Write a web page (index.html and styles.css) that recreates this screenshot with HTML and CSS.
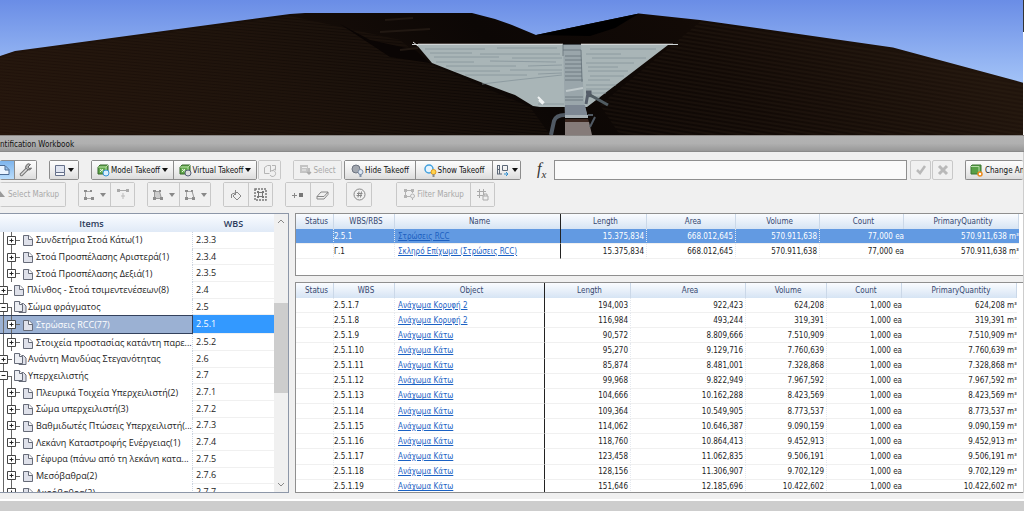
FILE: index.html
```html
<!DOCTYPE html>
<html lang="el">
<head>
  <meta charset="utf-8">
  <title>Quantification Workbook</title>
  <link rel="stylesheet" href="styles.css">
</head>
<body>
  <!-- shared icons -->
  <svg class="defs" width="0" height="0">
    <symbol id="page" viewBox="0 0 10 12">
      <path d="M.5 1.5h5.500l3.500 3.500v6.500h-9z" fill="#dfe1ea" stroke="#666b78"/>
      <path d="M5.500 1.500v4h4" fill="#fff" stroke="#666b78"/>
    </symbol>
    <symbol id="pages" viewBox="0 0 13 12">
      <path d="M5.500 2.500h4l2.500 2.500v6.500h-7z" fill="#dfe1ea" stroke="#666b78"/>
      <path d="M.5 .5h5l3 3v7h-8z" fill="#eceef3" stroke="#666b78"/>
      <path d="M5.500 .5v3h3" fill="#fff" stroke="#666b78"/>
    </symbol>
    <symbol id="plus" viewBox="0 0 9 9">
      <path d="M.5 .5h8v8h-8z" fill="#fff" stroke="#444"/>
      <path d="M2.500 4.500h4M4.500 2.500v4" stroke="#222"/>
    </symbol>
    <symbol id="minus" viewBox="0 0 9 9">
      <path d="M.5 .5h8v8h-8z" fill="#fff" stroke="#444"/>
      <path d="M2.500 4.500h4" stroke="#222"/>
    </symbol>
    <symbol id="cube" viewBox="0 0 13 13">
      <path d="M1 3l2-2h8v7l-2 2H1z" fill="#62a84c" stroke="#35672a"/>
      <path d="M1 3h8v7M9 3l2-2" fill="none" stroke="#b9e0a6"/>
      <path d="M3 5l4 3M3 8l3-3" stroke="#e4f5dc"/>
    </symbol>
    <symbol id="shape" viewBox="0 0 12 12">
      <path d="M2.500 2.500v7M2.500 9.500h7M2.500 2.500h5" fill="none" stroke="#aaa"/>
      <path d="M1 1h3v2H1zM1 8h3v3H1zM8 8h3v3H8zM7 1h2v2H7z" fill="#8c8c8c"/>
    </symbol>
    <symbol id="filter" viewBox="0 0 13 13">
      <path d="M2 2.500h9M2.500 2v7M2 8.500h5M9.500 2v3" fill="none" stroke="#b4b4b4"/>
      <path d="M1 1h3v3H1zM8 1h3v3H8zM1 7h3v3H1z" fill="#b4b4b4"/>
      <circle cx="9.500" cy="8" r="2" fill="#eee" stroke="#b4b4b4"/>
      <path d="M9.500 10v2" stroke="#b4b4b4"/>
    </symbol>
  </svg>

  <div class="page">
    <svg class="scene" viewBox="0 0 1024 135" preserveAspectRatio="none">
      <defs>
        <linearGradient id="sky" x1="0" y1="0" x2="0" y2="1">
          <stop offset="0" stop-color="#6a8de6"/>
          <stop offset=".65" stop-color="#a6c6f8"/>
        </linearGradient>
        <linearGradient id="ground" x1="0" y1="1" x2="1" y2=".9">
          <stop offset="0" stop-color="#22130b"/>
          <stop offset=".3" stop-color="#190f09"/>
          <stop offset=".55" stop-color="#0c0705"/>
          <stop offset=".75" stop-color="#120a06"/>
          <stop offset="1" stop-color="#20140c"/>
        </linearGradient>
        <pattern id="contourLeft" width="12" height="3" patternUnits="userSpaceOnUse" patternTransform="rotate(5)">
          <path d="M0 1h12" stroke="#3b2617" stroke-width=".6" opacity=".6"/>
        </pattern>
        <pattern id="contourRight" width="12" height="4" patternUnits="userSpaceOnUse" patternTransform="rotate(9)">
          <path d="M0 1h12" stroke="#3a2718" stroke-width=".7" opacity=".6"/>
        </pattern>
      </defs>
      <rect width="1024" height="135" fill="url(#sky)"/>
      <path d="M0 56L15 51 45 47 290 14 305 13H472L495 19 512 25 536 35 639 13.500 700 20 893 47.500 1024 83V135H0z" fill="url(#ground)"/>
      <path d="M0 58L15 53 290 16 400 40 430 64 530 107 550 135H0z" fill="url(#contourLeft)"/>
      <path d="M670 47L700 22 893 50 1024 85V135H620L600 105z" fill="url(#contourRight)"/>
      <path d="M536 35L639 13.500 615 28 590 36z" fill="#000"/>
      <path d="M340 24l30 16 45 10 15 13-40-6z" fill="#0a0504"/>
      <path d="M385 20l28-2M380 32l50-3M400 50l18-2" stroke="#211812" stroke-width="2"/>

      <path d="M416 44L432 63 488 85 515 95 533 106 540 107H587L668 45z" fill="#a9b5b7"/>
      <g fill="none" stroke="#87949a" stroke-width=".8">
        <path d="M425 49h60M497 48h60M590 49h66M430 53h42M480 54h80M586 54h35M434 57h65M512 58h50M592 58h54M436 62h38M490 61l66 1M586 63h48M446 66h70M528 66l34-1M588 67h30M454 71h46M510 70h52M588 71h40M465 75h62M538 74l24-1M590 76h34M482 84l34-4 46-5M588 80h22M586 85h30M586 89h24M586 93h20M538 104h26M586 97h14"/>
      </g>
      <path d="M412 44.500H678" stroke="#d0d5d6"/>
      <path d="M418 43.500h145M581 43.500h92" stroke="#4d4643"/>
      <path d="M413 42l5 4" stroke="#ddd"/>
      <path d="M538 97l6 6M539 100l4 4" stroke="#f0f3f3" stroke-width="2"/>
      <path d="M563 44H581L584 104 588 118H565z" fill="#9aa6ab"/>
      <path d="M563 50h18l1 32M563 44v12M565 56h16M565 60h17M565 64h17M565 68h17M565 72h17M565 76h17M565 80h18M565 97h18M565 100h18" fill="none" stroke="#66727a" stroke-width=".8"/>
      <path d="M563 44.500h18" stroke="#464c50"/>
      <path d="M566 91l17-3" stroke="#c0c9cb" stroke-width="2"/>
      <path d="M565 105h20l3 13h-23z" fill="#7d8793"/>
      <path d="M565 115h23v3h-23z" fill="#a7b0b5"/>
      <path d="M565 119h23l1 3h-24z" fill="#3b2720"/>
      <path d="M565 122h24l3 13h-27z" fill="#857b79"/>
      <path d="M551 135l3-14q2-6 11-6" fill="none" stroke="#505963" stroke-width="4"/>
      <path d="M588 115h5M595 117l-5 10" stroke="#505963" stroke-width="2"/>
      <path d="M586 104l2-11M586 92h4v5" fill="none" stroke="#555d69" stroke-width="3"/>
      <path d="M590 95l18 10" stroke="#515c62" stroke-width="3"/>
      <path d="M1023.500 0v32" stroke="#333"/>
      <path d="M1023.500 32v103" stroke="#fff"/>
    </svg>

    <div class="titlebar">ntification Workbook</div>

    <div class="workbook">
      <div class="toolbar top">
        <div class="group">
          <button class="on cut" aria-label="Workbook"><svg width="12" height="12" viewBox="0 0 12 12"><path d="M0 1.500h5l4 4v5H0M5 2v4h4" fill="#eaf4ff" stroke="#4b6a92"/></svg></button>
          <button class="w22" aria-label="Tools"><svg width="14" height="14" viewBox="0 0 14 14"><path d="M2.500 11.500L8 6" stroke="#777" stroke-width="3.500" stroke-linecap="round"/><path d="M2.500 11.500L8 6" stroke="#ddd" stroke-width="1.500" stroke-linecap="round"/><path d="M11.500 1.500a3 3 0 1 0 1 3.500l-2.500 .5-1-1.500z" fill="#bbb" stroke="#666"/></svg></button>
        </div>
        <div class="group gap12">
          <button class="w30" aria-label="View"><svg width="12" height="13" viewBox="0 0 12 13"><path d="M1.500 1.500h9v7h-9z" fill="#dfe4f0" stroke="#65708a"/><path d="M1.500 8.500h9v3h-9z" fill="#f4f6fa" stroke="#65708a"/></svg><i class="caret"></i></button>
        </div>
        <div class="group gap12">
          <button class="w82"><svg width="13" height="13"><use href="#cube"/><circle cx="9" cy="9" r="3" fill="#d9efff" stroke="#3493d6"/></svg>Model Takeoff<i class="caret"></i></button>
          <button class="w83"><svg width="13" height="13"><use href="#cube"/><circle cx="9" cy="9" r="3" fill="#ddd" stroke="#55607a"/></svg>Virtual Takeoff<i class="caret"></i></button>
        </div>
        <div class="group off gap1">
          <button class="w21" disabled aria-label="Takeoff to"><svg width="14" height="13" viewBox="0 0 14 13"><path d="M1.500 3.500l3-2h3v6M1.500 3.500v6h5M9 1.500h3.500v5M7 8a3 3 0 1 1 0 3M12 5l-3 2" fill="none" stroke="#b4b4b4"/></svg></button>
        </div>
        <div class="group off gap12">
          <button class="w49" disabled><svg width="13" height="13" viewBox="0 0 13 13"><path d="M1 1h8v8H1z" fill="#c4c4c4"/><path d="M3 3.500h5M3 6h4" stroke="#eee"/><path d="M10 4v5M8 8l2 2 2-2" fill="none" stroke="#aaa" stroke-width="1.500"/></svg>Select</button>
        </div>
        <div class="group gap2">
          <button class="w71"><svg width="13" height="13" viewBox="0 0 13 13"><circle cx="5" cy="5" r="4" fill="#a3a8b0" stroke="#6d7480"/><circle cx="9.500" cy="8" r="2.500" fill="#dce6f2" stroke="#7e8ea5"/><path d="M9.500 10v3" stroke="#7e8ea5" stroke-width="2"/></svg>Hide Takeoff</button>
          <button class="w76"><svg width="13" height="13" viewBox="0 0 13 13"><circle cx="5" cy="5" r="4" fill="#e6f5ff" stroke="#43a0dd" stroke-width="1.500"/><circle cx="9.500" cy="8" r="2.500" fill="#ffd34d" stroke="#e39a1c"/><path d="M9.500 10v3" stroke="#8a8a8a" stroke-width="2"/></svg>Show Takeoff</button>
          <button class="w30" aria-label="Columns"><svg width="14" height="13" viewBox="0 0 14 13"><path d="M1.500 1v9M3.500 1v9M1 1.500h3M1 5.500h3M6.500 1.500h5v5h-5zM1 10h5" fill="none" stroke="#5c6878"/><path d="M8 10h4l-2-2M12 10l-2 2" fill="none" stroke="#2e8fd0"/></svg><i class="caret"></i></button>
        </div>
        <label class="fx" for="formula">f<sub>x</sub></label>
        <input class="formula" id="formula" type="text">
        <div class="pair off">
          <button class="w21" disabled aria-label="Accept"><svg width="12" height="12" viewBox="0 0 12 12"><path d="M2 6l3 3 5-7" fill="none" stroke="#b9b9b9" stroke-width="2.500"/></svg></button>
          <button class="w21" disabled aria-label="Cancel"><svg width="12" height="12" viewBox="0 0 12 12"><path d="M2 2l8 8M10 2l-8 8" stroke="#b9b9b9" stroke-width="3"/></svg></button>
        </div>
        <div class="group gap12 last">
          <button class="change"><svg width="13" height="13" viewBox="0 0 13 13"><path d="M1 2l1-1h9v8l-1 1H1z" fill="#58a046" stroke="#3a7430"/><path d="M1 2.500h8v8" fill="none" stroke="#b6dda8"/><circle cx="10" cy="10" r="2" fill="#fff" stroke="#ec8a1c" stroke-width="1.500"/></svg>Change An</button>
        </div>
      </div>

      <div class="toolbar low">
        <div class="group off">
          <button class="markup" disabled><svg width="6" height="12" viewBox="0 0 6 12"><path d="M0 2l5 6H0z" fill="#999"/></svg>Select Markup</button>
        </div>
        <div class="group off gap12">
          <button class="w32" disabled aria-label="Polyline"><svg width="12" height="12"><use href="#shape"/></svg><i class="caret"></i></button>
          <button class="w25" disabled aria-label="Split"><svg width="12" height="12" viewBox="0 0 12 12"><path d="M1 1.500h10" stroke="#aaa"/><path d="M0 0h3v3H0zM9 0h3v3H9z" fill="#aaa"/><path d="M6 4v6M4 7h4" stroke="#bbb"/></svg></button>
        </div>
        <div class="group off gap12">
          <button class="w32" disabled aria-label="Area"><svg width="12" height="12" viewBox="0 0 12 12"><path d="M2.500 2.500h5l2 7h-7z" fill="#ccc" stroke="#999"/><path d="M1 1h3v2H1zM1 8h3v3H1zM8 8h3v3H8zM7 1h2v2H7z" fill="#8c8c8c"/></svg><i class="caret"></i></button>
          <button class="w32" disabled aria-label="Polygon"><svg width="12" height="12"><use href="#shape"/><path d="M8 2l2 7" stroke="#999"/></svg><i class="caret"></i></button>
        </div>
        <div class="group off gap12">
          <button class="w25" disabled aria-label="Fill"><svg width="12" height="12" viewBox="0 0 12 12"><path d="M3 7l4-4 4 4-4 4zM5.500 1v5M1.500 5v4M2 5l3-1" fill="none" stroke="#888"/></svg></button>
          <button class="w25" disabled aria-label="Box"><svg width="13" height="13" viewBox="0 0 13 13"><path d="M1 1h11v11H1z" fill="none" stroke="#777" stroke-width="1.500" stroke-dasharray="2 1"/><path d="M4.500 4.500h4v4h-4z" fill="none" stroke="#777"/><path d="M3 3h2v2H3zM8 3h2v2H8zM3 8h2v2H3zM8 8h2v2H8z" fill="#777"/></svg></button>
        </div>
        <div class="group off gap12">
          <button class="w25" disabled aria-label="Add point"><svg width="12" height="12" viewBox="0 0 12 12"><path d="M0 6.500h5M2.500 4v5" stroke="#888"/><path d="M7 4h4v4H7z" fill="#777"/></svg></button>
          <button class="w24" disabled aria-label="Erase"><svg width="13" height="12" viewBox="0 0 13 12"><path d="M1 7.500l4-4.500h7L8 7.500zM1 7.500V10h7l4-4.500V3" fill="none" stroke="#888"/></svg></button>
        </div>
        <div class="group off gap12">
          <button class="w25" disabled aria-label="Count"><svg width="13" height="13" viewBox="0 0 13 13"><circle cx="6.500" cy="6.500" r="5.500" fill="none" stroke="#888"/><path d="M6 3.500l-1 6M8.500 3.500l-1 6M4 5.500h5.500M3.500 7.500h5.500" stroke="#888"/></svg></button>
        </div>
        <div class="group off gap24">
          <button class="w74" disabled><svg width="13" height="13"><use href="#filter"/></svg>Filter Markup</button>
          <button class="w25" disabled aria-label="Lock filter"><svg width="13" height="13" viewBox="0 0 13 13"><path d="M1 3.500h9M1 7.500h6M3.500 1v9M7.500 1v6" stroke="#aaa"/><path d="M7 8h5v4H7zM8 8V6h3v2" fill="none" stroke="#aaa"/></svg></button>
        </div>
      </div>

      <div class="panes">
        <div class="tree-pane">
          <div class="tree-box">
            <table class="tree">
              <thead><tr><th class="items">Items</th><th>WBS</th></tr></thead>
            </table>
            <table class="tree rows">
              <tbody id="tree"></tbody>
            </table>
          </div>
          <div class="scrollbar">
            <svg width="8" height="5" viewBox="0 0 8 5"><path d="M1 4l3-3 3 3" fill="none" stroke="#888"/></svg>
            <div class="thumb"></div>
            <svg width="8" height="5" viewBox="0 0 8 5"><path d="M1 1l3 3 3-3" fill="none" stroke="#888"/></svg>
          </div>
        </div>

        <div class="grids">
          <div class="grid-box upper">
            <table class="grid">
              <colgroup><col class="c-status"><col class="c-wbs"><col class="c-name"><col class="c-len"><col class="c-area"><col class="c-vol"><col class="c-count"><col></colgroup>
              <thead><tr><th>Status</th><th>WBS/RBS</th><th>Name</th><th>Length</th><th>Area</th><th>Volume</th><th>Count</th><th>PrimaryQuantity</th></tr></thead>
              <tbody id="takeoffs"></tbody>
            </table>
          </div>
          <div class="grid-box lower">
            <table class="grid">
              <colgroup><col class="c-status"><col class="c-wbs"><col class="c-name"><col class="c-len"><col class="c-area"><col class="c-vol"><col class="c-count"><col></colgroup>
              <thead><tr><th>Status</th><th>WBS</th><th>Object</th><th>Length</th><th>Area</th><th>Volume</th><th>Count</th><th>PrimaryQuantity</th></tr></thead>
              <tbody id="objects"></tbody>
            </table>
          </div>
        </div>
      </div>
    </div>
    <div class="footer"></div>
  </div>

  <script>
    // wbs, name, level, icon, toggle
    var items = [
      ["2.3.3", "Συνδετήρια Στοά Κάτω(1)", 2, "page", "plus"],
      ["2.3.4", "Στοά Προσπέλασης Αριστερά(1)", 2, "page", "plus"],
      ["2.3.5", "Στοά Προσπέλασης Δεξιά(1)", 2, "page", "plus"],
      ["2.4", "Πλίνθος - Στοά τσιμεντενέσεων(8)", 1, "page", "plus"],
      ["2.5", "Σώμα φράγματος", 1, "pages", "minus"],
      ["2.5.1", "Στρώσεις RCC(77)", 2, "page", "plus"],
      ["2.5.2", "Στοιχεία προστασίας κατάντη παρε...", 2, "page", "plus"],
      ["2.6", "Ανάντη Μανδύας Στεγανότητας", 1, "pages", "plus"],
      ["2.7", "Υπερχειλιστής", 1, "pages", "minus"],
      ["2.7.1", "Πλευρικά Τοιχεία Υπερχειλιστή(2)", 2, "page", "plus"],
      ["2.7.2", "Σώμα υπερχειλιστή(3)", 2, "page", "plus"],
      ["2.7.3", "Βαθμιδωτές Πτώσεις Υπερχειλιστή(...", 2, "page", "plus"],
      ["2.7.4", "Λεκάνη Καταστροφής Ενέργειας(1)", 2, "page", "plus"],
      ["2.7.5", "Γέφυρα (πάνω από τη λεκάνη κατα...", 2, "page", "plus"],
      ["2.7.6", "Μεσόβαθρα(2)", 2, "page", "plus"],
      ["2.7.7", "Ακρόβαθρα(2)", 2, "page", "plus"]
    ];
    // wbs, name, length, area, volume, count
    var takeoffs = [
      ["2.5.1", "Στρώσεις RCC", "15.375,834", "668.012,645", "570.911,638", "77,000"],
      ["Γ.1", "Σκληρό Επίχωμα (Στρώσεις RCC)", "15.375,834", "668.012,645", "570.911,638", "77,000"]
    ];
    var objects = [
      ["2.5.1.7", "Ανάχωμα Κορυφή 2", "194,003", "922,423", "624,208", "1,000"],
      ["2.5.1.8", "Ανάχωμα Κορυφή 2", "116,984", "493,244", "319,391", "1,000"],
      ["2.5.1.9", "Ανάχωμα Κάτω", "90,572", "8.809,666", "7.510,909", "1,000"],
      ["2.5.1.10", "Ανάχωμα Κάτω", "95,270", "9.129,716", "7.760,639", "1,000"],
      ["2.5.1.11", "Ανάχωμα Κάτω", "85,874", "8.481,001", "7.328,868", "1,000"],
      ["2.5.1.12", "Ανάχωμα Κάτω", "99,968", "9.822,949", "7.967,592", "1,000"],
      ["2.5.1.13", "Ανάχωμα Κάτω", "104,666", "10.162,288", "8.423,569", "1,000"],
      ["2.5.1.14", "Ανάχωμα Κάτω", "109,364", "10.549,905", "8.773,537", "1,000"],
      ["2.5.1.15", "Ανάχωμα Κάτω", "114,062", "10.646,387", "9.090,159", "1,000"],
      ["2.5.1.16", "Ανάχωμα Κάτω", "118,760", "10.864,413", "9.452,913", "1,000"],
      ["2.5.1.17", "Ανάχωμα Κάτω", "123,458", "11.062,835", "9.506,191", "1,000"],
      ["2.5.1.18", "Ανάχωμα Κάτω", "128,156", "11.306,907", "9.702,129", "1,000"],
      ["2.5.1.19", "Ανάχωμα Κάτω", "151,646", "12.185,696", "10.422,602", "1,000"]
    ];

    function fillTree() {
      var html = "";
      for (var i = 0; i < items.length; i++) {
        var it = items[i];
        var w = it[3] == "pages" ? 13 : 10;
        html += "<tr class='" + (it[0] == "2.5.1" ? "selected" : "") + "'><td class='items level" + it[2] + " " + it[4] + "'><div class='node'>" +
          "<svg class='toggle' width='9' height='9'><use href='#" + it[4] + "'/></svg>" +
          "<svg class='" + it[3] + "' width='" + w + "' height='12'><use href='#" + it[3] + "'/></svg>" +
          "<span>" + it[1] + "</span></div></td><td>" + it[0] + "</td></tr>";
      }
      document.getElementById("tree").innerHTML = html;
    }

    function fillGrid(id, rows) {
      var html = "";
      for (var i = 0; i < rows.length; i++) {
        var r = rows[i];
        html += "<tr><td></td><td>" + r[0] + "</td><td><a href='#'>" + r[1] + "</a></td><td>" + r[2] + "</td><td>" + r[3] +
          "</td><td>" + r[4] + "</td><td>" + r[5] + " ea</td><td>" + r[4] + " m³</td></tr>";
      }
      document.getElementById(id).innerHTML = html;
    }

    fillTree();
    fillGrid("takeoffs", takeoffs);
    fillGrid("objects", objects);
    document.getElementById("takeoffs").rows[0].className = "selected";
  </script>
</body>
</html>
```
FILE: styles.css
```css
* {
  box-sizing: border-box;
}
body {
  margin: 0;
  background-color: #cdcdcd;
  color: #1c1c1c;
  font-family: "DejaVu Sans Condensed", "DejaVu Sans", sans-serif;
  font-size: 8px;
}
.defs {
  position: absolute;
}
.page {
  overflow: hidden;
}
.scene {
  display: block;
  width: 100%;
  height: 135px;
}
.titlebar {
  height: 17px;
  border-top: 1px solid #8b8886;
  border-bottom: 1px solid #8a8a8a;
  background: linear-gradient(#b4b4b4, #b0b0b0 50%, #989898);
  color: #111;
  line-height: 17px;
  white-space: nowrap;
}
.workbook {
  padding-top: 8px;
  background-color: #f0f0f0;
  margin-right: 1px;
}

/* toolbars */
.toolbar {
  display: flex;
  align-items: stretch;
}
.top {
  height: 20px;
}
.low {
  height: 25px;
  margin-top: 2px;
}
.group, .pair {
  display: flex;
  flex: none;
}
.group {
  border: 1px solid #8c8c8c;
  border-radius: 2px;
}
.pair {
  gap: 1px;
  margin-left: 3px;
}
.gap1 {
  margin-left: 1px;
}
.gap2 {
  margin-left: 2px;
}
.gap12 {
  margin-left: 12px;
}
.gap24 {
  margin-left: 24px;
}
button {
  display: flex;
  align-items: center;
  justify-content: center;
  gap: 1px;
  padding: 0;
  border: 0;
  background: linear-gradient(#fdfdfd, #ececec 60%, #dcdcdc);
  color: #111;
  font-family: inherit;
  font-size: 8px;
  white-space: nowrap;
}
button svg {
  flex: none;
}
.group button + button {
  border-left: 1px solid #8c8c8c;
}
.group.off, .pair button {
  border-color: #c8c8c8;
}
.off button {
  background: #f0f0f0;
  color: #a8a8a8;
}
.group.off button + button {
  border-left-color: #c8c8c8;
}
.pair button {
  border: 1px solid #c8c8c8;
  border-radius: 2px;
}
.group:first-child {
  border-left: 0;
}
.on {
  background: linear-gradient(#7db4ec, #b9dcfb);
}
.cut {
  width: 14px;
  justify-content: flex-start;
}
.w21 { width: 21px; }
.w22 { width: 22px; }
.w24 { width: 23px; }
.w25 { width: 24px; }
.w30 { width: 28px; }
.w32 { width: 31px; }
.w49 { width: 47px; }
.w71 { width: 70px; }
.w74 { width: 73px; }
.w76 { width: 77px; }
.w82 { width: 81px; }
.w83 { width: 83px; }
.markup {
  width: 65px;
  gap: 2px;
  justify-content: flex-start;
}
.last {
  border-right: 0;
  width: 58px;
  overflow: hidden;
}
.change {
  padding-left: 4px;
  gap: 2px;
}
.caret {
  margin-left: 1px;
  border: 3px solid transparent;
  border-top: 4px solid #111;
  border-bottom: 0;
}
.off .caret {
  margin-left: 4px;
  border-top-color: #888;
}
.fx {
  width: 33px;
  padding-left: 16px;
  color: #333;
  font-family: "Liberation Serif", serif;
  font-size: 16px;
  font-style: italic;
  line-height: 18px;
  white-space: nowrap;
}
.fx sub {
  font-size: 11px;
  line-height: 0;
}
.formula {
  flex: 1;
  min-width: 0;
  border: 1px solid #8f8f8f;
  background-color: #fafafa;
}

/* panes */
.panes {
  display: flex;
  gap: 6px;
  height: 280px;
  margin-top: 6px;
}
.tree-pane {
  display: flex;
  flex: none;
  width: 289px;
  border: 1px solid #8d97a8;
  border-left: 0;
  background-color: #fff;
}
.tree-box {
  flex: 1;
  overflow: hidden;
}
table {
  width: 100%;
  border-collapse: separate;
  border-spacing: 0;
  table-layout: fixed;
}
th, td {
  padding: 0;
  font-weight: normal;
  white-space: nowrap;
}
.tree {
  font-family: "Open Sans", "Noto Sans", sans-serif;
  font-size: 9px;
}
.tree th {
  height: 18px;
  background: linear-gradient(#fafcff, #e0eaf7);
  color: #2c3b5c;
  font-weight: 600;
}
.tree .items {
  width: 193px;
}
.tree th.items {
  padding-right: 10px;
}
.rows {
  height: 269px;
}
.rows td {
  padding-left: 3px;
  border-bottom: 1px solid #f0f0f0;
  line-height: 14px;
}
.rows td.items {
  padding: 0;
  border-right: 1px dotted #ccd4e0;
  border-bottom: 0;
  overflow: hidden;
  background-repeat: no-repeat;
}
.node {
  display: flex;
  align-items: center;
  height: 15px;
}
/* connector lines of the tree */
.rows .level1 {
  background-image: linear-gradient(#666, #666), linear-gradient(#666, #666);
  background-position: 3px 0, 7px 8px;
  background-size: 1px 100%, 5px 1px;
}
.rows .level1.minus {
  background-image: linear-gradient(#666, #666), linear-gradient(#666, #666), linear-gradient(#666, #666);
  background-position: 3px 0, 7px 8px, 11px 8px;
  background-size: 1px 100%, 5px 1px, 1px 100%;
}
.rows .level2 {
  background-image: linear-gradient(#666, #666), linear-gradient(#666, #666), linear-gradient(#666, #666);
  background-position: 3px 0, 11px 0, 16px 8px;
  background-size: 1px 100%, 1px 100%, 4px 1px;
}
.level2 .node {
  padding-left: 7px;
}
.node svg {
  flex: none;
}
.toggle {
  margin-right: 7px;
}
.level1 .toggle {
  margin-left: -1px;
  margin-right: 6px;
}
.node span {
  margin-left: 3px;
}
.node .pages + span {
  margin-left: 1px;
}
.rows .selected td {
  background-color: #3399ff;
  color: #fff;
}
.rows .selected td.items {
  border: 1px solid #33415c;
  border-left: 0;
  background-color: #9bb1d3;
}
.scrollbar {
  display: flex;
  flex: none;
  flex-direction: column;
  align-items: center;
  width: 14px;
  padding: 5px 0;
  background-color: #f0f0f0;
}
.scrollbar svg:last-child {
  margin-top: auto;
}
.thumb {
  width: 100%;
  height: 90px;
  margin-top: 79px;
  background-color: #cdcdcd;
}

/* takeoff grids */
.grids {
  display: flex;
  flex: 1;
  flex-direction: column;
  gap: 6px;
  min-width: 0;
}
.grid-box {
  overflow: hidden;
  border: 1px solid #8f8f8f;
  border-right: 0;
  background-color: #fff;
}
.upper {
  height: 63px;
  padding-right: 4px;
}
.lower {
  flex: 1;
  padding-right: 6px;
}
.lower .grid {
  height: 212px;
}
.c-status { width: 38px; }
.c-wbs { width: 61px; }
.c-name { width: 166px; }
.c-len { width: 86px; }
.c-area { width: 89px; }
.c-vol { width: 84px; }
.c-count { width: 84px; }
.lower .c-name { width: 150px; }
.lower .c-area { width: 115px; }
.lower .c-vol { width: 81px; }
.lower .c-count { width: 75px; }
.grid th {
  height: 15px;
  padding-left: 4px;
  border-right: 1px solid #cbd8e8;
  background: linear-gradient(#fafcff, #d6e4f4);
  color: #35476f;
}
.grid td {
  height: 15px;
  border-right: 1px dotted #e4e8ee;
  border-bottom: 1px solid #f0f0f0;
  text-align: right;
}
.grid td:nth-child(2), .grid td:nth-child(3) {
  text-align: left;
}
.grid td:nth-child(3) {
  padding-left: 3px;
}
.grid th:nth-child(3), .grid td:nth-child(3) {
  border-right: 1px solid #222;
}
.grid td:nth-child(4), .grid td:nth-child(5), .grid td:nth-child(6) {
  padding-right: 2px;
}
.grid td:nth-child(7), .grid td:nth-child(8) {
  border-right: 0;
}
.grid a {
  color: #1b62c4;
}
.grid .selected td {
  background-color: #629ae2;
  color: #fff;
}
.grid .selected a {
  color: #1c5fc0;
}
.footer {
  height: 8px;
  border-bottom: 2px solid #fff;
  background-color: #f0f0f0;
}
```
